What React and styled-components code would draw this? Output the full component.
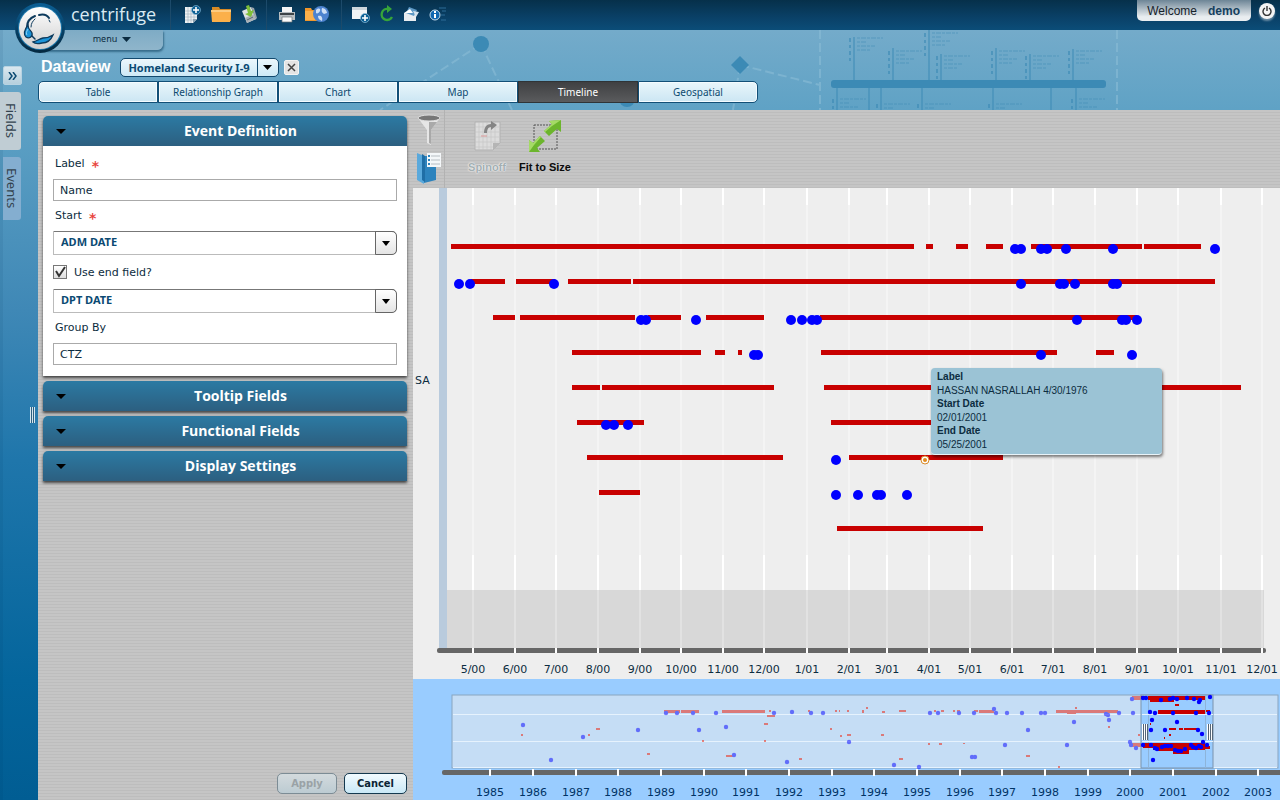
import React, { useState } from 'react';
import styled, { createGlobalStyle, css } from 'styled-components';

const GlobalStyle = createGlobalStyle`
  *, *::before, *::after { box-sizing: border-box; }
  html, body, #root { height: 100%; }
  body {
    margin: 0;
    background: #c3c3c3;
    font-family: "DejaVu Sans", Verdana, sans-serif;
    font-size: 11px;
    color: #0c2c40;
  }
  button, input, select { font-family: inherit; font-size: inherit; }
  button { cursor: pointer; }
`;

const stripes = css`
  background: repeating-linear-gradient(#c5c5c5 0 2px, #bdbdbd 2px 3px);
`;

/* ---------- data ---------- */

const TABS = ['Table', 'Relationship Graph', 'Chart', 'Map', 'Timeline', 'Geospatial'];

const PLOT_WIDTH = 841;
const MONTHS = [
  [34, '5/00'], [76, '6/00'], [117, '7/00'], [159, '8/00'], [201, '9/00'],
  [242, '10/00'], [284, '11/00'], [325, '12/00'], [368, '1/01'], [410, '2/01'],
  [448, '3/01'], [490, '4/01'], [531, '5/01'], [573, '6/01'], [614, '7/01'],
  [656, '8/01'], [698, '9/01'], [739, '10/01'], [782, '11/01'], [823, '12/01'],
];

const ROWS = [
  {
    y: 56,
    bars: [[12, 475], [487, 494], [517, 529], [547, 564], [592, 703], [705, 762]],
    dots: [576, 582, 602, 608, 627, 674, 776],
  },
  {
    y: 91,
    bars: [[32, 66], [77, 116], [129, 192], [194, 776]],
    dots: [20, 31, 115, 582, 621, 625, 636, 674, 678],
  },
  {
    y: 127,
    bars: [[54, 76], [81, 196], [209, 242], [267, 325], [381, 698]],
    dots: [202, 207, 257, 352, 363, 373, 378, 638, 683, 687, 698],
  },
  {
    y: 162,
    bars: [[133, 262], [276, 286], [299, 303], [382, 618], [657, 675]],
    dots: [315, 319, 602, 693],
  },
  { y: 197, bars: [[133, 161], [163, 335], [385, 802]], dots: [] },
  { y: 232, bars: [[138, 205], [392, 560]], dots: [167, 175, 189] },
  { y: 267, bars: [[148, 344], [410, 564]], dots: [397], selected: 486 },
  { y: 302, bars: [[160, 201]], dots: [397, 419, 438, 442, 468] },
  { y: 338, bars: [[398, 544]], dots: [] },
];

const OVERVIEW_WIDTH = 867;
const YEARS = [77, 120, 163, 205, 248, 291, 333, 376, 419, 461, 504, 547, 589, 632, 675, 717, 760, 803, 845];

const OLD_DOTS = [
  [110, 46], [170, 58], [138, 81], [225, 51], [253, 34], [264, 34], [280, 34], [286, 51],
  [303, 34], [313, 48], [321, 76], [361, 34], [374, 83], [379, 33], [398, 34], [410, 34],
  [436, 63], [481, 86], [506, 88], [517, 34], [525, 34], [546, 34], [561, 34], [559, 78],
  [562, 78], [581, 30], [583, 34], [592, 66], [594, 34], [609, 34], [615, 51], [628, 34],
  [632, 34], [654, 66], [661, 43], [693, 35], [695, 36], [696, 41], [706, 34], [720, 34],
  [719, 20], [717, 63], [718, 66], [723, 69],
];

// [x, y, width, height]
const OLD_BARS = [
  [251, 31, 16, 3], [268, 31, 18, 3], [309, 31, 43, 3], [354, 36, 8, 2], [313, 76, 7, 2],
  [183, 49, 4, 2], [351, 44, 4, 2], [351, 61, 2, 2], [108, 55, 2, 2], [175, 55, 2, 2],
  [234, 74, 3, 2], [289, 61, 2, 2], [386, 79, 3, 2], [417, 49, 2, 2], [427, 56, 2, 2],
  [434, 55, 4, 2], [356, 31, 2, 2], [395, 31, 2, 2], [422, 31, 2, 2], [426, 31, 1, 2],
  [434, 31, 2, 2], [449, 31, 2, 3], [453, 28, 2, 2], [469, 32, 3, 2], [486, 31, 7, 2],
  [468, 55, 3, 2], [486, 79, 4, 2], [515, 64, 2, 2], [526, 64, 3, 2], [521, 31, 2, 2],
  [528, 31, 3, 2], [540, 31, 2, 2], [544, 31, 3, 2], [561, 31, 4, 2], [566, 31, 15, 3],
  [550, 64, 2, 1], [613, 76, 4, 2], [645, 87, 2, 2], [643, 31, 62, 3], [654, 34, 9, 1],
  [662, 28, 2, 2], [695, 47, 2, 2], [725, 55, 2, 2], [719, 17, 10, 4], [718, 64, 11, 4],
];

const NEW_BARS = [
  [735, 17, 57, 4], [737, 20, 24, 3], [728, 17, 5, 3], [762, 25, 4, 2], [745, 31, 47, 4],
  [793, 31, 4, 2], [756, 49, 7, 2], [766, 49, 4, 2], [771, 49, 15, 2], [756, 55, 2, 2],
  [751, 58, 1, 2], [737, 44, 1, 2], [730, 64, 62, 5], [740, 68, 52, 3], [745, 70, 18, 2],
  [760, 70, 16, 5], [792, 67, 5, 3],
];

const NEW_DOTS = [
  [730, 19], [733, 19], [748, 21], [757, 20], [760, 19], [764, 20], [774, 19], [781, 20],
  [787, 21], [786, 23], [797, 18], [737, 33], [742, 34], [760, 34], [783, 34], [796, 34],
  [739, 41], [764, 43], [738, 51], [752, 51], [785, 51], [789, 55], [730, 66], [738, 66],
  [742, 69], [744, 70], [749, 68], [752, 67], [755, 67], [758, 67], [762, 71], [765, 72],
  [768, 72], [772, 70], [778, 66], [780, 68], [783, 69], [786, 67], [788, 68], [790, 63],
  [794, 66], [740, 81],
];

/* ---------- header ---------- */

const Page = styled.div`
  display: flex;
  flex-direction: column;
  min-height: 100vh;
`;

const TopBar = styled.header`
  position: relative;
  z-index: 2;
  display: flex;
  height: 30px;
  padding-left: 71px;
  background: linear-gradient(#06304a, #0a4168 60%, #0b4d78);
`;

const Logo = styled.svg`
  position: absolute;
  left: 14px;
  top: 2px;
  width: 52px;
  height: 52px;
`;

const Brand = styled.h1`
  width: 99px;
  margin: 0;
  font: 400 18px/29px "Open Sans", sans-serif;
  color: #d9eaf3;
`;

const ToolGroup = styled.div`
  display: flex;
  align-items: center;
  padding: 0 ${({ $end = 4 }) => $end}px 2px 6px;
  border-left: 1px solid #1c4a6a;
`;

const ToolButton = styled.button`
  display: grid;
  place-items: center;
  width: ${({ $width }) => $width}px;
  height: 26px;
  padding: 0;
  border: 0;
  background: none;

  svg { width: 22px; height: 20px; overflow: visible; }
`;

const Account = styled.div`
  display: flex;
  align-items: flex-start;
  gap: 8px;
  margin-left: auto;
  padding-right: 5px;
`;

const Welcome = styled.div`
  display: flex;
  gap: 11px;
  padding: 0 11px 0 10px;
  height: 21px;
  border-radius: 0 0 5px 5px;
  background: linear-gradient(#6d8596, #e9edf0 80%);
  font: 12px/22px "Liberation Sans", Arial, sans-serif;
  color: #16222b;

  strong { color: #143f5e; }
`;

const PowerButton = styled.button`
  display: grid;
  place-items: center;
  width: 16px;
  height: 16px;
  margin-top: 3px;
  padding: 0;
  border: 0;
  border-radius: 8px;
  background: #f4f4f4;
  box-shadow: 0 2px 2px rgba(255, 255, 255, 0.4);
`;

/* ---------- frame ---------- */

const Body = styled.div`
  position: relative;
  display: flex;
  flex: 1;
  background: linear-gradient(#74abca 0, #5fa2c5 80px, #3f88b6 280px, #1f76ab 430px, #04659c 650px, #015d93);
`;

const Backdrop = styled.svg`
  position: absolute;
  left: 0;
  top: 0;
  width: 100%;
  height: 80px;
`;

const Rail = styled.nav`
  position: relative;
  display: flex;
  justify-content: space-between;
  width: 38px;
  padding: 36px 3px 36px 0;
  box-shadow: inset 3px 0 rgba(0, 50, 90, 0.08);
`;

const RailTabs = styled.div`
  display: flex;
  flex-direction: column;
  align-items: flex-end;
  gap: 7px;
  width: 22px;
`;

const ExpandButton = styled.button`
  display: grid;
  place-items: center;
  width: 19px;
  height: 19px;
  padding: 0;
  border: 1px solid #b8d3e2;
  border-radius: 2px;
  background: linear-gradient(#dbe8ef, #b5cfdd);
`;

const RailTab = styled.button`
  width: ${({ $active }) => ($active ? 21 : 18)}px;
  height: ${({ $active }) => ($active ? 58 : 63)}px;
  margin-right: 1px;
  padding: 0;
  border: 0;
  border-radius: 0 3px 3px 0;
  background: ${({ $active }) => ($active ? '#c0cdd4' : '#84aed0')};
  writing-mode: vertical-rl;
  font: 13px/18px "Noto Sans", sans-serif;
  color: #33434f;
`;

const Grip = styled.span`
  align-self: center;
  width: 5px;
  height: 16px;
  background: repeating-linear-gradient(90deg, #d5e6f0 0 1px, #2b5f80 1px 2px);
`;

const Main = styled.main`
  position: relative;
  display: flex;
  flex: 1;
  flex-direction: column;
  min-width: 0;
`;

const MenuButton = styled.button`
  display: flex;
  align-items: center;
  justify-content: center;
  gap: 5px;
  width: 125px;
  height: 20px;
  padding: 0 0 2px 23px;
  border: 0;
  border-radius: 0 0 6px 0;
  background: linear-gradient(#7eabc5, #8fb5cb);
  box-shadow: 1px 2px 2px rgba(20, 70, 100, 0.6);
  font: 9px/16px "Noto Sans", sans-serif;
  color: #0b2b40;
`;

const TitleRow = styled.div`
  display: flex;
  align-items: center;
  height: 20px;
  margin-top: 7px;
  padding-left: 3px;
`;

const Title = styled.h2`
  margin: 0 10px 0 0;
  font: bold 16px/20px "Liberation Sans", Arial, sans-serif;
  color: #fff;
`;

const ViewPicker = styled.div`
  display: grid;
  grid-template-columns: 136px 21px;
  width: 159px;
  height: 19px;
  border: 1px solid #12496e;
  border-radius: 5px;
  background: linear-gradient(#ecf7fc, #cde9f6);

  select, svg { grid-row: 1; }
  svg { grid-column: 2; align-self: center; justify-self: center; pointer-events: none; }
  select {
    grid-column: 1 / 3;
    min-width: 0;
    padding: 0 28px 0 7px;
    border: 0;
    appearance: none;
    background: linear-gradient(#12496e, #12496e) 136px 0 / 1px 100% no-repeat;
    font: bold 11px/17px "Noto Sans", sans-serif;
    color: #0b4a73;
  }
`;

const CloseButton = styled.button`
  display: grid;
  place-items: center;
  width: 15px;
  height: 15px;
  margin-left: 5px;
  padding: 0;
  border: 1px solid #f4f4f4;
  border-radius: 2px;
  background: #e4e4e4;
`;

const TabBar = styled.div`
  display: flex;
  width: 720px;
  max-width: 100%;
  margin: 4px 0 7px;
`;

const Tab = styled.button`
  flex: 1;
  height: 22px;
  padding: 0;
  border: 1px solid #124f77;
  background: linear-gradient(#e9f6fb, #cbe6f3);
  box-shadow: inset 0 0 0 1px #f4fbfe;
  font: 10px/18px "Noto Sans", sans-serif;
  color: #0d4a70;

  &:first-child { border-radius: 5px 0 0 5px; }
  &:last-child { border-radius: 0 5px 5px 0; }

  ${({ $active }) => $active && css`
    border-color: #2f3437;
    background: linear-gradient(#3f4042, #5a5b5d);
    box-shadow: none;
    color: #fff;
  `}
`;

const Workspace = styled.div`
  display: flex;
  flex: 1;
  ${stripes}
`;

/* ---------- settings ---------- */

const Settings = styled.aside`
  display: flex;
  flex-direction: column;
  gap: 5px;
  width: 375px;
  padding: 6px 6px 6px 5px;
`;

const Section = styled.section`
  border-radius: 5px 5px 0 0;
  box-shadow: 0 2px 3px rgba(0, 0, 0, 0.65);
`;

const SectionHeader = styled.button`
  display: flex;
  align-items: center;
  gap: 8px;
  width: 100%;
  height: 30px;
  padding: 0 0 0 13px;
  border: 0;
  border-radius: 5px 5px 0 0;
  background: linear-gradient(#2c7aa3, #2c5f80);
  font: bold 14px/28px "Open Sans", sans-serif;
  color: #fff;

  span { flex: 1; }
`;

const SectionBody = styled.div`
  padding: 3px 10px 11px;
  background: #fff;
`;

const FieldLabel = styled.label`
  display: flex;
  align-items: center;
  gap: 7px;
  height: 30px;
  padding: 0 0 2px 2px;

  em { height: 14px; font: bold 14px/20px "DejaVu Sans", sans-serif; color: #e8473f; }
`;

const TextField = styled.input`
  display: block;
  width: 100%;
  height: 22px;
  padding: 0 6px;
  border: 1px solid #aaa;
  background: #fff;
  color: #0c2c40;
`;

const Picker = styled.div`
  display: grid;
  grid-template-columns: 1fr 22px;
  height: 24px;

  select {
    grid-area: 1 / 1 / 2 / 3;
    padding: 0 30px 2px 7px;
    border: 1px solid #bbb;
    border-top-color: #777;
    border-radius: 0 5px 5px 0;
    appearance: none;
    background: #fff;
    font: bold 11px/18px "Noto Sans", sans-serif;
    color: #0b4a73;
  }
`;

const PickerArrow = styled.span`
  grid-area: 1 / 2 / 2 / 3;
  display: grid;
  place-items: center;
  z-index: 1;
  border: 1px solid #666;
  border-radius: 0 5px 5px 0;
  background: linear-gradient(#fff, #e4e4e4);
  pointer-events: none;
`;

const CheckRow = styled.label`
  display: flex;
  align-items: center;
  gap: 7px;
  height: 34px;
`;

const CheckBox = styled.span`
  display: grid;
  width: 14px;
  height: 14px;

  input, svg { grid-area: 1 / 1; }
  input {
    width: 14px;
    height: 14px;
    margin: 0;
    border: 1px solid #777;
    appearance: none;
    background: linear-gradient(#fff, #ddd);
  }
  svg { z-index: 1; pointer-events: none; }
  input:not(:checked) + svg { display: none; }
`;

const Actions = styled.div`
  display: flex;
  justify-content: flex-end;
  gap: 7px;
  margin-top: auto;
`;

const ActionButton = styled.button`
  min-width: ${({ $wide }) => ($wide ? 63 : 60)}px;
  height: 21px;
  padding: 0 8px;
  border: 1px solid #14394f;
  border-radius: 5px;
  background: linear-gradient(#f2fbff, #c9e8f6);
  font: bold 11px/17px "DejaVu Sans Condensed", "DejaVu Sans", sans-serif;
  color: #0b2434;

  &:disabled {
    border-color: #7c8c95;
    background: linear-gradient(#d3dadd, #bccbd2);
    color: #9aa2a6;
  }
`;

/* ---------- timeline ---------- */

const View = styled.section`
  display: flex;
  flex: 1;
  flex-direction: column;
  min-width: 0;
`;

const ViewTools = styled.div`
  display: flex;
  height: 78px;
`;

const SideTools = styled.div`
  display: flex;
  flex-direction: column;
  align-items: center;
  gap: 6px;
  width: 32px;
  padding-top: 4px;
  border-right: 1px solid #b2b2b2;

  button { padding: 0; border: 0; background: none; height: 32px; }
`;

const BigTool = styled.button`
  display: flex;
  flex-direction: column;
  align-items: center;
  gap: 6px;
  width: 58px;
  padding: 9px 0 0;
  border: 0;
  background: none;
  font: bold 11px/16px "Liberation Sans", Arial, sans-serif;
  color: #0a0a0a;
  white-space: nowrap;

  &:first-of-type { margin-left: 13px; }
  &:disabled { color: #a3afb2; text-shadow: 0 0 1px #fff, 0 0 2px #fff; }
`;

const Chart = styled.div`
  position: relative;
  display: flex;
  flex: 1;
  background: #eee;
`;

const GroupColumn = styled.div`
  display: flex;
  align-items: center;
  width: 26px;
  height: 385px;
  padding-left: 2px;
`;

const Plot = styled.div`
  position: relative;
  flex: 1;
  min-width: 0;

  > svg { display: block; width: 100%; height: 491px; }
`;

const axisText = css`
  text {
    font: 11px "DejaVu Sans", sans-serif;
    text-anchor: middle;
  }
`;

const PlotSvg = styled.svg`
  ${axisText}
  overflow: visible;
  fill: #0c2c40;
`;

const Tooltip = styled.dl`
  position: absolute;
  top: 180px;
  left: ${({ $left }) => $left};
  width: 231px;
  margin: 0;
  padding: 2px 6px 3px;
  border-bottom: 1px solid #e8f3f8;
  border-radius: 4px;
  background: #9bc3d5;
  box-shadow: 1px 2px 3px rgba(0, 0, 0, 0.5);
  font: 10px/14px "Liberation Sans", Arial, sans-serif;
  color: #0c2c40;

  dt { font-weight: bold; }
  dd { margin: 0; line-height: 13px; }
`;

const OverviewSvg = styled.svg`
  ${axisText}
  display: block;
  width: 100%;
  height: 121px;
  background: #9cf;
  fill: #036;
`;

/* ---------- drawings ---------- */

const Caret = ({ width = 9, fill = '#000' }) => (
  <svg width={width} height="5" viewBox="0 0 10 5" preserveAspectRatio="none" aria-hidden="true">
    <path d="M0 0h10L5 5z" fill={fill} />
  </svg>
);

const LogoMark = () => (
  <Logo viewBox="0 0 52 52" aria-hidden="true">
    <defs>
      <linearGradient id="ring" x1="0" y1="0" x2="0" y2="1">
        <stop offset="0" stopColor="#0b5f95" />
        <stop offset="1" stopColor="#04283f" />
      </linearGradient>
      <linearGradient id="face" x1="0" y1="0" x2="0" y2="1">
        <stop offset="0" stopColor="#fff" />
        <stop offset="1" stopColor="#cfcfcf" />
      </linearGradient>
    </defs>
    <circle cx="26" cy="26" r="25" fill="url(#ring)" />
    <circle cx="26" cy="26" r="22" fill="#1d77ab" />
    <circle cx="26" cy="26" r="21" fill="url(#face)" />
    <g fill="none" stroke="#0d3a5c" strokeLinecap="round">
      <path d="M13 25c0-5 3-9 8-11" strokeWidth="2" />
      <path d="M25 13c4-1 8 0 10 3" strokeWidth="2" />
      <path d="M17 25c0-4 2-6 4-8M36 20l-1-2" strokeWidth="1" />
      <path d="M18 34l3 3" strokeWidth="1.5" />
    </g>
    <path d="M14 23c-3 4-5 9-2 12 3 2 7 0 6-4-1-3-4-3-4-8z" fill="#1b93d8" stroke="#0d3a5c" strokeWidth="1.3" />
    <path d="M14 27c-2 3-2 5-1 6" fill="none" stroke="#8fd2f5" />
    <path d="M19 40c4-1 6-3 10-4 4 0 7-1 10-3-2 5-6 8-11 8-4 1-7 1-9-1z" fill="#1b93d8" stroke="#0d3a5c" strokeWidth="1.3" />
  </Logo>
);

const NewSheetIcon = () => (
  <svg viewBox="0 0 22 20" aria-hidden="true">
    <path d="M4 3h12v12l-4 4H4z" fill="#eef1f3" />
    <path d="M4 7h12M4 10h12M4 13h12M4 16h10M7 3v16M10 3v16M13 3v15" stroke="#9fb0bc" strokeWidth=".6" />
    <path d="M12 19l4-4h-4z" fill="#8aa0b0" />
    <circle cx="15" cy="6" r="4.500" fill="#0c5f93" stroke="#8fc0dd" strokeWidth=".6" />
    <path d="M15 3v6M12 6h6" stroke="#fff" strokeWidth="1.6" />
  </svg>
);

const FolderIcon = () => (
  <svg viewBox="0 0 22 20" aria-hidden="true">
    <path d="M2 3h7l1 2h11v12H2z" fill="#d88a24" />
    <path d="M1 6h20l-1 12H2z" fill="#fbb04a" />
    <path d="M1 6h20v2H1z" fill="#fdcb7f" />
  </svg>
);

const SaveIcon = () => (
  <svg viewBox="0 0 22 20" aria-hidden="true">
    <path d="M3 7l9-4 5 12-9 4z" fill="#dfe2e4" />
    <path d="M12 3l3 1 3 10-1 1z" fill="#9aa4ab" />
    <path d="M6 14l9-4 2 5-9 4z" fill="#aab2b8" />
    <path d="M8 16l6-3" stroke="#5d6a72" />
    <path d="M7 2l3-1 2 6 3-1-3 7-6-3 3-1z" fill="#7fbf3a" />
  </svg>
);

const PrintIcon = () => (
  <svg viewBox="0 0 22 20" aria-hidden="true">
    <path d="M6 3h10v6H6z" fill="#f5f5f5" />
    <path d="M3 8h16v8H3z" fill="#b6bcc0" />
    <path d="M4 9h14v2H4z" fill="#3c4347" />
    <path d="M6 13h10v5H6z" fill="#fafafa" stroke="#6a7277" strokeWidth=".7" />
  </svg>
);

const WorldFolderIcon = () => (
  <svg viewBox="0 0 22 20" aria-hidden="true">
    <path d="M-1 4h6l1 2h9v11H-1z" fill="#f0962a" />
    <path d="M-1 7h14v9H-1z" fill="#fbb04a" />
    <circle cx="15" cy="10" r="8" fill="#4d83cf" />
    <path d="M10 6c3-3 5-1 4 1s-3 3-4 2zM16 4c3 0 5 3 5 5l-3 1c-2-1-3-3-2-6zM12 12c3-1 5 1 4 5-3-1-4-3-4-5z" fill="#cfe0f6" />
  </svg>
);

const AddViewIcon = () => (
  <svg viewBox="0 0 22 20" aria-hidden="true">
    <path d="M2 3h15v12H2z" fill="#f3f5f6" />
    <path d="M2 3h15v3H2z" fill="#cdd6dc" />
    <circle cx="15" cy="14" r="4.500" fill="#0c5f93" stroke="#8fc0dd" strokeWidth=".7" />
    <path d="M15 11v6M12 14h6" stroke="#fff" strokeWidth="1.6" />
  </svg>
);

const RefreshIcon = () => (
  <svg viewBox="0 0 22 20" aria-hidden="true">
    <path d="M12 5a5.500 5.500 0 1 0 4 8" fill="none" stroke="#37a53a" strokeWidth="2.4" />
    <path d="M11 1l5 4-5 4z" fill="#37a53a" />
  </svg>
);

const SendIcon = () => (
  <svg viewBox="0 0 22 20" aria-hidden="true">
    <path d="M3 9h12v8H3z" fill="#e9edf0" />
    <path d="M8 3l8 3-3 6-8-3z" fill="#5d98c4" />
    <path d="M3 9l6-4 3 4z" fill="#fff" />
    <path d="M12 7l6 1-3 5z" fill="#d5e3ed" />
  </svg>
);

const InfoIcon = () => (
  <svg viewBox="0 0 22 20" aria-hidden="true">
    <path d="M12 4h7M15 7h4M14 11h4M14 16h5" stroke="#2c6d97" />
    <circle cx="8" cy="11" r="5" fill="#0e66b0" stroke="#c6dcec" />
    <path d="M8 10v4M8 7v2" stroke="#fff" strokeWidth="2" />
  </svg>
);

const FunnelIcon = () => (
  <svg width="24" height="32" viewBox="0 0 24 32" aria-hidden="true">
    <path d="M1 4l9 12v13l4 2V16l9-12z" fill="#e6e6e6" />
    <path d="M12 8h8l-6 8v14l-2-1z" fill="#a9a9a9" />
    <ellipse cx="12" cy="4" rx="11" ry="3" fill="#777" stroke="#ddd" />
  </svg>
);

const BookIcon = () => (
  <svg width="24" height="32" viewBox="0 0 24 32" aria-hidden="true">
    <path d="M0 1l7 3v28l-7-4z" fill="#5aa9dc" />
    <path d="M7 4h12v24L7 31z" fill="#2d83bd" />
    <path d="M5 2l3 2v26l-3-2z" fill="#1f6ea6" />
    <path d="M10 1h14v14H10z" fill="#f4f7f9" />
    <path d="M14 4h9M14 8h9M14 12h9" stroke="#b6bdc2" />
    <path d="M11 3h2v2h-2zM11 7h2v2h-2zM11 11h2v2h-2z" fill="#2d83bd" />
  </svg>
);

const SpinoffIcon = () => (
  <svg width="34" height="34" viewBox="0 0 34 34" aria-hidden="true">
    <path d="M5 3h25v21l-7 7H5z" fill="#dcdcdc" stroke="#b2b2b2" />
    <path d="M9 3v28M13 3v28M17 3v28M21 3v28M25 3v25M5 8h24M5 13h24M5 18h24M5 23h24M5 28h20" stroke="#c4c4c4" strokeWidth=".6" />
    <path d="M23 31v-7h7z" fill="#b5b5b5" />
    <path d="M11 17h6" stroke="#d99" />
    <path d="M14 14c0-6 3-9 7-9V2l6 4-6 5V8c-3 0-4 3-4 6z" fill="#858585" />
  </svg>
);

const FitIcon = () => (
  <svg width="34" height="34" viewBox="0 0 34 34" aria-hidden="true">
    <path d="M6 6h23v24H6z" fill="none" stroke="#555" strokeDasharray="2 1" />
    <path d="M33 1v12l-4-3-8 7-5-5 8-7-3-3z" fill="#6cb52d" />
    <path d="M33 1l-9 6-7 6-1-1 8-7-3-3z" fill="#a5da66" />
    <path d="M1 33V21l4 3 7-7 5 5-8 7 3 4z" fill="#6cb52d" />
    <path d="M1 33V21l4 3 7-7 1 1-7 8z" fill="#a5da66" />
  </svg>
);

// x, top, bottom, label y
const STEMS = [
  [854, 7, 50, 8], [893, 18, 50, 21], [929, 0, 50, 3], [941, 24, 50, 26], [996, 18, 50, 21],
  [1030, 24, 50, 26], [1073, 19, 50, 21], [837, 58, 80, 69], [869, 58, 80, 0], [881, 58, 80, 74],
  [922, 58, 80, 74], [993, 58, 80, 74], [1051, 58, 80, 0], [1076, 58, 80, 69],
];

const BackdropArt = () => (
  <Backdrop aria-hidden="true">
    <g stroke="#8bbcd6" strokeWidth="2" strokeDasharray="9 4" fill="none">
      <path d="M481 14L380 80M481 14l31 66M740 35l-7 45M740 35l80 20M820 0v80M1117 0v80" opacity=".6" />
    </g>
    <g fill="#3c8ab5">
      <circle cx="481" cy="14" r="8" />
      <circle cx="627" cy="69" r="8" />
      <path d="M740 26l9 9-9 9-9-9z" />
      <rect x="831" y="50" width="275" height="8" rx="3" />
    </g>
    {STEMS.map(([x, top, bottom, label]) => (
      <g key={x} stroke="#3c8ab5">
        <path d={`M${x} ${top}V${bottom}`} />
        {label > 0 && (
          <path
            d={`M${x + 3} ${label}h26M${x + 3} ${label + 4}h9M${x + 3} ${label + 8}h18M${x + 3} ${label + 12}h13`}
            strokeDasharray="3 1 5 1"
            opacity=".5"
          />
        )}
        {label > 0 && <path d={`M${x - 4} ${label}v24`} strokeWidth="2" strokeDasharray="4 3 3 3" opacity=".6" />}
      </g>
    ))}
  </Backdrop>
);

/* ---------- charts ---------- */

const pct = (x) => `${(x / PLOT_WIDTH) * 100}%`;
const opct = (x) => `${(x / OVERVIEW_WIDTH) * 100}%`;

function TimelinePlot() {
  return (
    <PlotSvg role="img" aria-label="Event timeline, May 2000 to December 2001">
      <rect x="0" y="0" width="8" height="462" fill="#b9cbdd" />
      <rect x="8" y="402" width={pct(817)} height="60" fill="#d8d8d8" />
      {MONTHS.map(([x]) => (
        <g key={x}>
          <rect x={pct(x - 1)} y="0" width="2" height="402" fill="#f4f4f4" />
          <rect x={pct(x - 1)} y="0" width="2" height="17" fill="#fff" />
          <rect x={pct(x - 1)} y="367" width="2" height="35" fill="#fff" />
          <rect x={pct(x - 1)} y="402" width="2" height="58" fill="#e2e2e2" />
        </g>
      ))}
      <rect x="-2" y="460" width={pct(829)} height="5" rx="2" fill="#666" />
      {MONTHS.map(([x, label]) => (
        <g key={label}>
          <rect x={pct(x - 1)} y="460" width="2" height="5" fill="#fff" />
          <text x={pct(x)} y="485">{label}</text>
        </g>
      ))}
      {ROWS.map(({ y, bars, dots, selected }) => (
        <g key={y}>
          {bars.map(([from, to]) => (
            <rect key={from} x={pct(from)} y={y} width={pct(to - from)} height="5" fill="#c80000" />
          ))}
          {dots.map((x, i) => (
            <circle key={i} cx={pct(x)} cy={y + 5} r="5" fill="#00f" />
          ))}
          {selected && (
            <g>
              <circle cx={pct(selected)} cy={y + 5} r="4" fill="#fff" stroke="#d98c2b" />
              <circle cx={pct(selected)} cy={y + 5} r="2" fill="#e08a1e" />
            </g>
          )}
        </g>
      ))}
    </PlotSvg>
  );
}

const Marks = ({ bars, dots, red = '#c80000' }) => (
  <>
    {bars.map(([x, y, w, h], i) => (
      <rect key={`b${i}`} x={opct(x)} y={y} width={opct(w)} height={h} fill={red} />
    ))}
    {dots.map(([x, y], i) => (
      <circle key={`d${i}`} cx={opct(x)} cy={y} r="2.2" fill="#00f" />
    ))}
  </>
);

const Handle = ({ x }) => (
  <>
    {[0, 2, 4].map((step) => (
      <g key={step}>
        <rect x={opct(x + step)} y="45" width="1" height="16" fill="#fff" />
        <rect x={opct(x + step + 1)} y="45" width="1" height="16" fill="#567" />
      </g>
    ))}
  </>
);

function Overview() {
  return (
    <OverviewSvg role="img" aria-label="Overview, 1985 to 2003">
      <rect x={opct(39)} y="16" width={opct(826)} height="73" fill="#c5ddf5" stroke="#8aa5c0" />
      <g fill="#e6f2fd">
        <rect x={opct(40)} y="35" width={opct(824)} height="1" />
        <rect x={opct(40)} y="62" width={opct(824)} height="1" />
        <rect x={opct(40)} y="88" width={opct(824)} height="1" />
      </g>
      <g opacity=".5">
        <Marks bars={OLD_BARS} dots={OLD_DOTS} red="#f01800" />
      </g>
      <rect x={opct(728)} y="16" width={opct(72)} height="73" fill="#9cf" stroke="#7b93ad" />
      <rect x={opct(735)} y="17" width="1" height="72" fill="#8db4da" />
      <rect x={opct(792)} y="17" width="1" height="72" fill="#8db4da" />
      <g fill="#e6f2fd">
        <rect x={opct(729)} y="35" width={opct(71)} height="1" />
        <rect x={opct(729)} y="62" width={opct(71)} height="1" />
      </g>
      <Marks bars={NEW_BARS} dots={NEW_DOTS} />
      <Handle x={729} />
      <Handle x={794} />
      <rect x={opct(29)} y="91" width="100%" height="5" rx="2" fill="#666" />
      {YEARS.map((x, i) => (
        <g key={x}>
          <rect x={opct(x - 1)} y="90" width="2" height="7" fill="#fff" />
          <text x={opct(x)} y="117">{1985 + i}</text>
        </g>
      ))}
    </OverviewSvg>
  );
}

/* ---------- form ---------- */

const DateSelect = ({ id, value, ...rest }) => (
  <Picker>
    <select id={id} defaultValue={value} {...rest}>
      <option>ADM DATE</option>
      <option>DPT DATE</option>
    </select>
    <PickerArrow>
      <Caret width={8} />
    </PickerArrow>
  </Picker>
);

function EventDefinition() {
  const [useEnd, setUseEnd] = useState(true);

  return (
    <SectionBody>
      <FieldLabel htmlFor="label-field">Label <em>*</em></FieldLabel>
      <TextField id="label-field" defaultValue="Name" />
      <FieldLabel htmlFor="start-field">Start <em>*</em></FieldLabel>
      <DateSelect id="start-field" value="ADM DATE" />
      <CheckRow>
        <CheckBox>
          <input type="checkbox" checked={useEnd} onChange={() => setUseEnd(!useEnd)} />
          <svg viewBox="0 0 14 14" aria-hidden="true">
            <path d="M3 6l3 5 6-9" fill="none" stroke="#333" strokeWidth="2" />
          </svg>
        </CheckBox>
        Use end field?
      </CheckRow>
      <DateSelect id="end-field" value="DPT DATE" aria-label="End" />
      <FieldLabel htmlFor="group-field">Group By</FieldLabel>
      <TextField id="group-field" defaultValue="CTZ" />
    </SectionBody>
  );
}

const SettingsSection = ({ title, children }) => (
  <Section>
    <SectionHeader type="button">
      <Caret width={10} />
      <span>{title}</span>
    </SectionHeader>
    {children}
  </Section>
);

export default function App() {
  const [tab, setTab] = useState('Timeline');

  return (
    <Page>
      <GlobalStyle />
      <TopBar>
        <LogoMark />
        <Brand>centrifuge</Brand>
        <ToolGroup $end={2}>
          <ToolButton $width={29} aria-label="New"><NewSheetIcon /></ToolButton>
          <ToolButton $width={29} aria-label="Open"><FolderIcon /></ToolButton>
          <ToolButton $width={29} aria-label="Save"><SaveIcon /></ToolButton>
        </ToolGroup>
        <ToolGroup $end={8}>
          <ToolButton $width={28} aria-label="Print"><PrintIcon /></ToolButton>
          <ToolButton $width={32} aria-label="Publish"><WorldFolderIcon /></ToolButton>
        </ToolGroup>
        <ToolGroup>
          <ToolButton $width={26} aria-label="Add view"><AddViewIcon /></ToolButton>
          <ToolButton $width={26} aria-label="Refresh"><RefreshIcon /></ToolButton>
          <ToolButton $width={24} aria-label="Send"><SendIcon /></ToolButton>
          <ToolButton $width={28} aria-label="Info"><InfoIcon /></ToolButton>
        </ToolGroup>
        <Account>
          <Welcome>
            <span>Welcome</span>
            <strong>demo</strong>
          </Welcome>
          <PowerButton aria-label="Log out">
            <svg width="10" height="10" viewBox="0 0 10 10" aria-hidden="true">
              <path d="M3 2a4 4 0 1 0 4 0M5 0v5" fill="none" stroke="#333" strokeWidth="1.4" />
            </svg>
          </PowerButton>
        </Account>
      </TopBar>

      <Body>
        <BackdropArt />
        <Rail>
          <RailTabs>
            <ExpandButton aria-label="Expand">
              <svg width="10" height="8" viewBox="0 0 10 8" aria-hidden="true">
                <path d="M1 0l3 4-3 4M5 0l3 4-3 4" fill="none" stroke="#0b4a73" strokeWidth="1.5" />
              </svg>
            </ExpandButton>
            <RailTab $active>Fields</RailTab>
            <RailTab>Events</RailTab>
          </RailTabs>
          <Grip />
        </Rail>

        <Main>
          <MenuButton>
            menu
            <Caret fill="#0b2b40" />
          </MenuButton>
          <TitleRow>
            <Title>Dataview</Title>
            <ViewPicker>
              <select aria-label="Dataview">
                <option>Homeland Security I-94</option>
              </select>
              <Caret />
            </ViewPicker>
            <CloseButton aria-label="Close dataview">
              <svg width="9" height="9" viewBox="0 0 9 9" aria-hidden="true">
                <path d="M1 1l7 7M8 1L1 8" stroke="#444" strokeWidth="1.5" />
              </svg>
            </CloseButton>
          </TitleRow>
          <TabBar>
            {TABS.map((name) => (
              <Tab key={name} $active={name === tab} onClick={() => setTab(name)}>
                {name}
              </Tab>
            ))}
          </TabBar>

          <Workspace>
            <Settings>
              <SettingsSection title="Event Definition">
                <EventDefinition />
              </SettingsSection>
              <SettingsSection title="Tooltip Fields" />
              <SettingsSection title="Functional Fields" />
              <SettingsSection title="Display Settings" />
              <Actions>
                <ActionButton disabled>Apply</ActionButton>
                <ActionButton $wide>Cancel</ActionButton>
              </Actions>
            </Settings>

            <View>
              <ViewTools>
                <SideTools>
                  <button type="button" aria-label="Filter"><FunnelIcon /></button>
                  <button type="button" aria-label="Legend"><BookIcon /></button>
                </SideTools>
                <BigTool disabled><SpinoffIcon />Spinoff</BigTool>
                <BigTool><FitIcon />Fit to Size</BigTool>
              </ViewTools>
              <Chart>
                <GroupColumn>SA</GroupColumn>
                <Plot>
                  <TimelinePlot />
                  <Tooltip $left={pct(492)}>
                    <dt>Label</dt>
                    <dd>HASSAN NASRALLAH 4/30/1976</dd>
                    <dt>Start Date</dt>
                    <dd>02/01/2001</dd>
                    <dt>End Date</dt>
                    <dd>05/25/2001</dd>
                  </Tooltip>
                </Plot>
              </Chart>
              <Overview />
            </View>
          </Workspace>
        </Main>
      </Body>
    </Page>
  );
}
